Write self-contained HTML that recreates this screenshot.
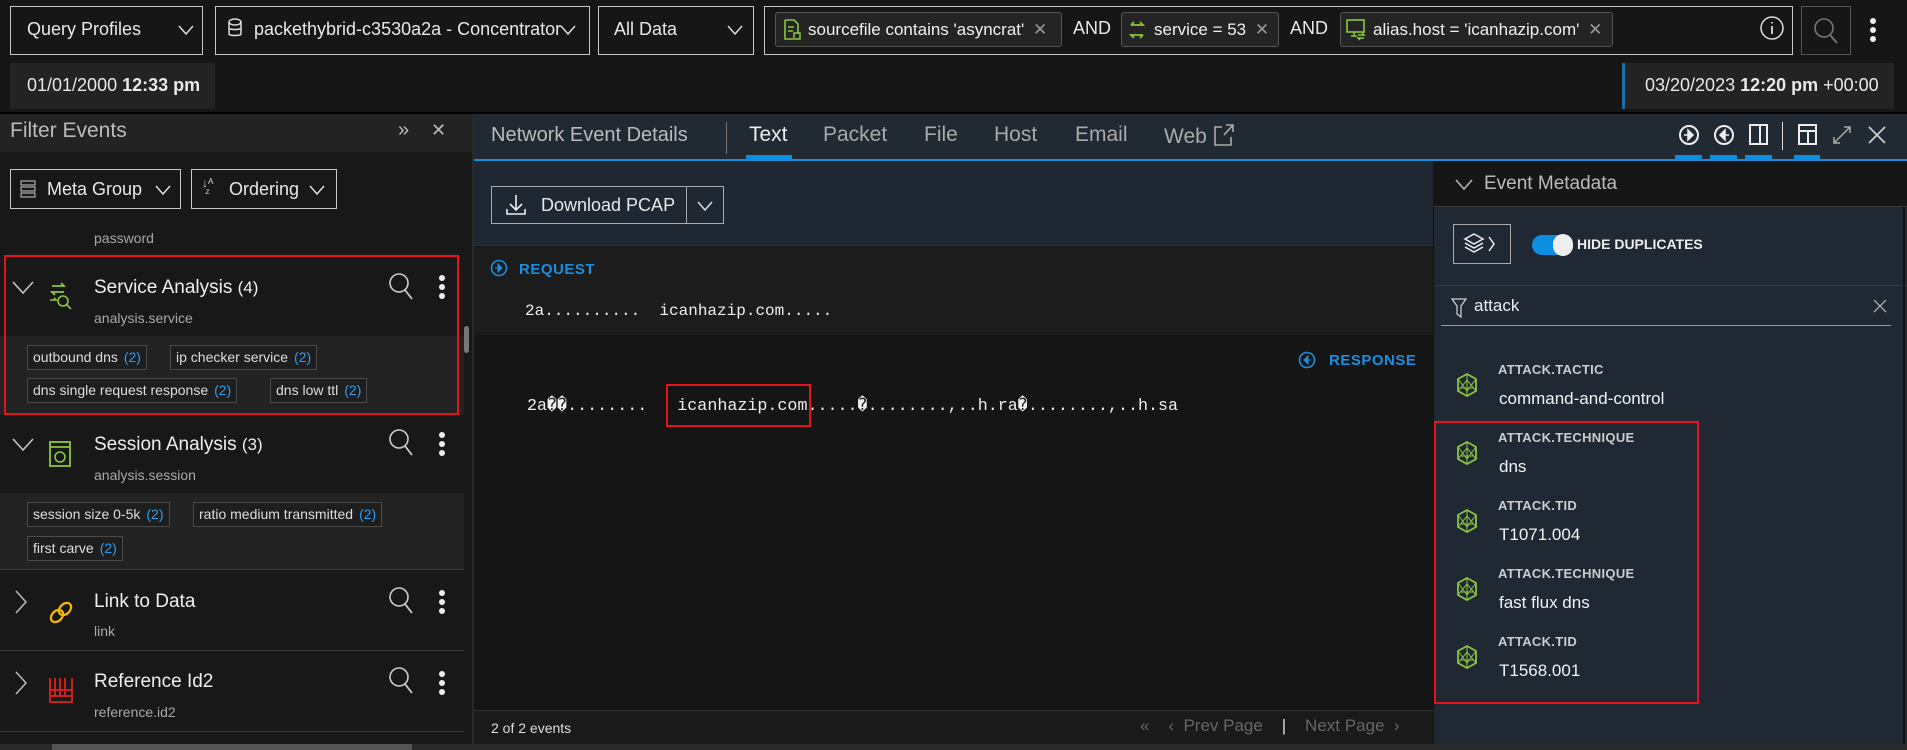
<!DOCTYPE html>
<html><head><meta charset="utf-8"><style>
*{box-sizing:border-box;margin:0;padding:0}
body{width:1907px;height:750px;background:#161616;font-family:"Liberation Sans",sans-serif;color:#e8e8e8;position:relative;overflow:hidden}
.a{position:absolute;white-space:nowrap}
.box{position:absolute;border:1px solid #c8c8c8;background:#161616}
.chip{position:absolute;border:1px solid #555;border-radius:3px;background:#242424;height:35px;top:12px;font-size:17px;line-height:33px;padding-left:32px;color:#f0f0f0}
.tag{position:absolute;border:1px solid #4a4a4a;background:#1e1e1e;height:25px;font-size:14px;line-height:23px;padding:0 5px;color:#ddd}
.tag b{font-weight:normal;color:#2a9df4;margin-left:6px}
.sub{color:#a8a8a8;font-size:14px}
.ttl{font-size:19px;color:#eee}
.lab{font-size:13px;font-weight:bold;color:#ccc;letter-spacing:.3px}
.val{font-size:17px;color:#f2f2f2}
.mono{font-family:"Liberation Mono",monospace;font-size:16px;color:#eee}
</style></head><body>
<!-- top bar -->
<div class="box" style="left:10px;top:6px;width:193px;height:49px"></div>
<div class="a" style="left:27px;top:19px;font-size:18px">Query Profiles</div>
<svg class="a" style="left:178px;top:24px" width="16" height="12"><path d="M1 2 L8 10 L15 2" stroke="#ddd" fill="none" stroke-width="1.5"/></svg>
<div class="box" style="left:215px;top:6px;width:375px;height:49px"></div>
<svg class="a" style="left:228px;top:18px" width="14" height="20"><ellipse cx="7" cy="4" rx="6" ry="3" stroke="#ddd" fill="none" stroke-width="1.5"/><path d="M1 4v12c0 2 12 2 12 0V4M1 10c0 2 12 2 12 0" stroke="#ddd" fill="none" stroke-width="1.5"/></svg>
<div class="a" style="left:254px;top:19px;font-size:18px">packethybrid-c3530a2a - Concentrator</div>
<svg class="a" style="left:560px;top:24px" width="16" height="12"><path d="M1 2 L8 10 L15 2" stroke="#ddd" fill="none" stroke-width="1.5"/></svg>
<div class="box" style="left:598px;top:6px;width:156px;height:49px"></div>
<div class="a" style="left:614px;top:19px;font-size:18px">All Data</div>
<svg class="a" style="left:727px;top:24px" width="16" height="12"><path d="M1 2 L8 10 L15 2" stroke="#ddd" fill="none" stroke-width="1.5"/></svg>
<div class="box" style="left:764px;top:6px;width:1029px;height:49px"></div>
<div class="chip" style="left:775px;width:287px">sourcefile contains 'asyncrat' <span style="color:#999;margin-left:4px">✕</span></div>
<svg class="a" style="left:783px;top:19px" width="18" height="22"><path d="M2 1h9l4 4v10M2 1v19h8" stroke="#8cc63f" fill="none" stroke-width="1.6"/><path d="M5 8h6M5 12h5" stroke="#8cc63f" stroke-width="1.5"/><rect x="11" y="14" width="6" height="6" stroke="#8cc63f" fill="none" stroke-width="1.5"/></svg>
<div class="a" style="left:1073px;top:18px;font-size:18px">AND</div>
<div class="chip" style="left:1121px;width:158px">service = 53 <span style="color:#999;margin-left:4px">✕</span></div>
<svg class="a" style="left:1128px;top:18px" width="18" height="24"><path d="M3 7h12l-3-3M15 17H3l3 3M3 7l3-3M15 17l-3 3" stroke="#8cc63f" fill="none" stroke-width="1.8"/></svg>
<div class="a" style="left:1290px;top:18px;font-size:18px">AND</div>
<div class="chip" style="left:1340px;width:273px">alias.host = 'icanhazip.com' <span style="color:#999;margin-left:4px">✕</span></div>
<svg class="a" style="left:1346px;top:19px" width="20" height="22"><rect x="1" y="1" width="17" height="12" stroke="#8cc63f" fill="none" stroke-width="1.6"/><path d="M5 17h6M8 13v4M12 16h6l-2-2M18 19h-6l2 2" stroke="#8cc63f" fill="none" stroke-width="1.5"/></svg>
<svg class="a" style="left:1759px;top:15px" width="26" height="26"><circle cx="13" cy="13" r="11" stroke="#ddd" fill="none" stroke-width="1.5"/><path d="M13 11v8M13 7v1.5" stroke="#ddd" stroke-width="1.8"/></svg>
<div class="box" style="left:1801px;top:6px;width:50px;height:49px;border-color:#555"></div>
<svg class="a" style="left:1813px;top:17px" width="26" height="28"><circle cx="11" cy="11" r="9" stroke="#777" fill="none" stroke-width="1.6"/><path d="M17 18l7 8" stroke="#777" stroke-width="1.8"/></svg>
<svg class="a" style="left:1867px;top:17px" width="12" height="26"><circle cx="6" cy="4" r="3" fill="#eee"/><circle cx="6" cy="13" r="3" fill="#eee"/><circle cx="6" cy="22" r="3" fill="#eee"/></svg>
<div class="a" style="left:10px;top:63px;width:205px;height:46px;background:#232323"></div>
<div class="a" style="left:27px;top:75px;font-size:18px">01/01/2000 <b>12:33 pm</b></div>
<div class="a" style="left:1622px;top:63px;width:272px;height:46px;background:#232323;border-left:3px solid #1a6fa8"></div>
<div class="a" style="left:1645px;top:75px;font-size:18px">03/20/2023 <b>12:20 pm</b> +00:00</div>
<div class="a" style="left:0;top:112px;width:1907px;height:2px;background:#000"></div>
<!-- left panel -->
<div class="a" style="left:0;top:114px;width:474px;height:636px;background:#181818"></div>
<div class="a" style="left:0;top:114px;width:474px;height:38px;background:#232323"></div>
<div class="a" style="left:10px;top:119px;font-size:21px;color:#bbb">Filter Events</div>
<div class="a" style="left:398px;top:119px;font-size:20px;color:#bbb">»</div>
<div class="a" style="left:431px;top:120px;font-size:18px;color:#bbb">✕</div>
<div class="box" style="left:10px;top:169px;width:171px;height:40px;background:#181818"></div>
<svg class="a" style="left:20px;top:180px" width="16" height="18"><rect x="1" y="1" width="14" height="4" stroke="#ccc" fill="none"/><rect x="1" y="7" width="14" height="4" stroke="#ccc" fill="none"/><rect x="1" y="13" width="14" height="4" stroke="#ccc" fill="none"/></svg>
<div class="a" style="left:47px;top:179px;font-size:18px">Meta Group</div>
<svg class="a" style="left:155px;top:184px" width="16" height="12"><path d="M1 2 L8 10 L15 2" stroke="#ddd" fill="none" stroke-width="1.5"/></svg>
<div class="box" style="left:191px;top:169px;width:146px;height:40px;background:#181818"></div>
<div class="a" style="left:202px;top:178px;font-size:12px;color:#ccc;line-height:10px">↓ᴬ<br>&nbsp;ᶻ</div>
<div class="a" style="left:229px;top:179px;font-size:18px">Ordering</div>
<svg class="a" style="left:309px;top:184px" width="16" height="12"><path d="M1 2 L8 10 L15 2" stroke="#ddd" fill="none" stroke-width="1.5"/></svg>
<div class="a sub" style="left:94px;top:230px">password</div>
<!-- service analysis -->
<svg class="a" style="left:12px;top:281px" width="22" height="14"><path d="M1 1 L11 12 L21 1" stroke="#ccc" fill="none" stroke-width="1.5"/></svg>
<svg class="a" style="left:48px;top:280px" width="26" height="30"><path d="M4 6h12l-3-3M16 12H4l3 3" stroke="#8cc63f" fill="none" stroke-width="1.8"/><circle cx="15" cy="21" r="5" stroke="#8cc63f" fill="none" stroke-width="1.6"/><path d="M19 25l4 4M2 20h6l-2-2" stroke="#8cc63f" fill="none" stroke-width="1.6"/></svg>
<div class="a ttl" style="left:94px;top:277px">Service Analysis <span style="font-size:17px">(4)</span></div>
<div class="a sub" style="left:94px;top:310px">analysis.service</div>
<svg class="a" style="left:388px;top:272px" width="28" height="30"><circle cx="11" cy="11" r="9" stroke="#ccc" fill="none" stroke-width="1.6"/><path d="M17 18l7 9" stroke="#ccc" stroke-width="1.8"/></svg>
<svg class="a" style="left:436px;top:274px" width="12" height="26"><circle cx="6" cy="4" r="3" fill="#eee"/><circle cx="6" cy="13" r="3" fill="#eee"/><circle cx="6" cy="22" r="3" fill="#eee"/></svg>
<div class="a" style="left:0;top:336px;width:464px;height:79px;background:#232323"></div>
<div class="tag" style="left:27px;top:345px">outbound dns<b>(2)</b></div>
<div class="tag" style="left:170px;top:345px">ip checker service<b>(2)</b></div>
<div class="tag" style="left:27px;top:378px">dns single request response<b>(2)</b></div>
<div class="tag" style="left:270px;top:378px">dns low ttl<b>(2)</b></div>
<div class="a" style="left:4px;top:255px;width:455px;height:160px;border:2px solid #e4141f"></div>
<div class="a" style="left:464px;top:326px;width:5px;height:27px;background:#777;border-radius:3px"></div>
<!-- session -->
<svg class="a" style="left:12px;top:438px" width="22" height="14"><path d="M1 1 L11 12 L21 1" stroke="#ccc" fill="none" stroke-width="1.5"/></svg>
<svg class="a" style="left:48px;top:440px" width="26" height="32"><rect x="2" y="2" width="20" height="24" stroke="#8cc63f" fill="none" stroke-width="1.8"/><path d="M2 7h20" stroke="#8cc63f" stroke-width="1.8"/><circle cx="12" cy="17" r="5" stroke="#8cc63f" fill="none" stroke-width="1.6"/></svg>
<div class="a ttl" style="left:94px;top:434px">Session Analysis <span style="font-size:17px">(3)</span></div>
<div class="a sub" style="left:94px;top:467px">analysis.session</div>
<svg class="a" style="left:388px;top:428px" width="28" height="30"><circle cx="11" cy="11" r="9" stroke="#ccc" fill="none" stroke-width="1.6"/><path d="M17 18l7 9" stroke="#ccc" stroke-width="1.8"/></svg>
<svg class="a" style="left:436px;top:431px" width="12" height="26"><circle cx="6" cy="4" r="3" fill="#eee"/><circle cx="6" cy="13" r="3" fill="#eee"/><circle cx="6" cy="22" r="3" fill="#eee"/></svg>
<div class="a" style="left:0;top:493px;width:464px;height:77px;background:#232323;border-bottom:1px solid #3a3a3a"></div>
<div class="tag" style="left:27px;top:502px">session size 0-5k<b>(2)</b></div>
<div class="tag" style="left:193px;top:502px">ratio medium transmitted<b>(2)</b></div>
<div class="tag" style="left:27px;top:536px">first carve<b>(2)</b></div>
<!-- link -->
<svg class="a" style="left:14px;top:590px" width="14" height="24"><path d="M2 1 L12 12 L2 23" stroke="#bbb" fill="none" stroke-width="1.5"/></svg>
<svg class="a" style="left:48px;top:600px" width="26" height="26"><ellipse cx="9" cy="16" rx="5" ry="7" transform="rotate(45 9 16)" stroke="#f5b800" fill="none" stroke-width="2.2"/><ellipse cx="17" cy="9" rx="5" ry="7" transform="rotate(45 17 9)" stroke="#f5b800" fill="none" stroke-width="2.2"/></svg>
<div class="a ttl" style="left:94px;top:591px">Link to Data</div>
<div class="a sub" style="left:94px;top:623px">link</div>
<svg class="a" style="left:388px;top:586px" width="28" height="30"><circle cx="11" cy="11" r="9" stroke="#ccc" fill="none" stroke-width="1.6"/><path d="M17 18l7 9" stroke="#ccc" stroke-width="1.8"/></svg>
<svg class="a" style="left:436px;top:589px" width="12" height="26"><circle cx="6" cy="4" r="3" fill="#eee"/><circle cx="6" cy="13" r="3" fill="#eee"/><circle cx="6" cy="22" r="3" fill="#eee"/></svg>
<div class="a" style="left:0;top:650px;width:464px;height:1px;background:#3a3a3a"></div>
<!-- reference -->
<svg class="a" style="left:14px;top:671px" width="14" height="24"><path d="M2 1 L12 12 L2 23" stroke="#bbb" fill="none" stroke-width="1.5"/></svg>
<svg class="a" style="left:48px;top:676px" width="26" height="30"><path d="M2 2v24h22V2M7 2v18M12 2v18M17 2v18M2 14h22M2 20h22" stroke="#e0201e" fill="none" stroke-width="1.8"/></svg>
<div class="a ttl" style="left:94px;top:671px">Reference Id2</div>
<div class="a sub" style="left:94px;top:704px">reference.id2</div>
<svg class="a" style="left:388px;top:666px" width="28" height="30"><circle cx="11" cy="11" r="9" stroke="#ccc" fill="none" stroke-width="1.6"/><path d="M17 18l7 9" stroke="#ccc" stroke-width="1.8"/></svg>
<svg class="a" style="left:436px;top:670px" width="12" height="26"><circle cx="6" cy="4" r="3" fill="#eee"/><circle cx="6" cy="13" r="3" fill="#eee"/><circle cx="6" cy="22" r="3" fill="#eee"/></svg>
<div class="a" style="left:0;top:731px;width:464px;height:1px;background:#3a3a3a"></div>
<div class="a" style="left:0;top:744px;width:1907px;height:6px;background:#2a2a2a"></div>
<div class="a" style="left:52px;top:744px;width:360px;height:6px;background:#555"></div>
<div class="a" style="left:472px;top:114px;width:2px;height:636px;background:#2a2a2a"></div>
<!-- center -->
<div class="a" style="left:474px;top:114px;width:1433px;height:46px;background:#212a33"></div>
<div class="a" style="left:474px;top:159px;width:1433px;height:2px;background:#1a8fd6"></div>
<div class="a" style="left:491px;top:124px;font-size:20px;color:#bbb">Network Event Details</div>
<div class="a" style="left:726px;top:122px;width:1px;height:32px;background:#777"></div>
<div class="a" style="left:749px;top:123px;font-size:21px;color:#eee">Text</div>
<div class="a" style="left:746px;top:155px;width:46px;height:5px;background:#0b8fe0"></div>
<div class="a" style="left:823px;top:123px;font-size:21px;color:#aaa">Packet</div>
<div class="a" style="left:924px;top:123px;font-size:21px;color:#aaa">File</div>
<div class="a" style="left:994px;top:123px;font-size:21px;color:#aaa">Host</div>
<div class="a" style="left:1075px;top:123px;font-size:21px;color:#aaa">Email</div>
<div class="a" style="left:1164px;top:125px;font-size:21px;color:#aaa">Web</div>
<svg class="a" style="left:1212px;top:123px" width="22" height="24"><path d="M10 4H3v18h16v-8M12 12l9-10M14 2h7v7" stroke="#aaa" fill="none" stroke-width="1.6"/></svg>
<svg class="a" style="left:1678px;top:124px" width="22" height="22"><circle cx="11" cy="11" r="9" stroke="#eee" fill="none" stroke-width="2"/><path d="M6 11h5M10 6l5 5-5 5z" stroke="#eee" fill="#eee" stroke-width="1.5"/></svg>
<svg class="a" style="left:1713px;top:124px" width="22" height="22"><circle cx="11" cy="11" r="9" stroke="#eee" fill="none" stroke-width="2"/><path d="M16 11h-5M12 6l-5 5 5 5z" stroke="#eee" fill="#eee" stroke-width="1.5"/></svg>
<svg class="a" style="left:1749px;top:124px" width="20" height="22"><rect x="1" y="1" width="17" height="19" stroke="#eee" fill="none" stroke-width="2"/><path d="M11 1v19" stroke="#eee" stroke-width="2"/></svg>
<div class="a" style="left:1782px;top:122px;width:1px;height:28px;background:#ddd"></div>
<svg class="a" style="left:1798px;top:124px" width="20" height="22"><rect x="1" y="1" width="17" height="19" stroke="#eee" fill="none" stroke-width="2"/><path d="M1 7h17M10 7v13" stroke="#eee" stroke-width="2"/></svg>
<svg class="a" style="left:1832px;top:125px" width="20" height="20"><path d="M2 18L18 2M12 2h6v6M2 12v6h6" stroke="#aaa" fill="none" stroke-width="1.5"/></svg>
<svg class="a" style="left:1867px;top:125px" width="20" height="20"><path d="M2 2L18 18M18 2L2 18" stroke="#ccc" stroke-width="1.8"/></svg>
<div class="a" style="left:1675px;top:155px;width:27px;height:5px;background:#0b8fe0"></div>
<div class="a" style="left:1710px;top:155px;width:27px;height:5px;background:#0b8fe0"></div>
<div class="a" style="left:1745px;top:155px;width:27px;height:5px;background:#0b8fe0"></div>
<div class="a" style="left:1794px;top:155px;width:26px;height:5px;background:#0b8fe0"></div>
<div class="a" style="left:474px;top:161px;width:960px;height:85px;background:#1f2832;border-bottom:1px solid #333"></div>
<div class="box" style="left:491px;top:186px;width:233px;height:38px;background:#1f2832;border-color:#aaa"></div>
<div class="a" style="left:686px;top:187px;width:1px;height:36px;background:#aaa"></div>
<svg class="a" style="left:505px;top:193px" width="22" height="24"><path d="M11 2v15M5 11l6 6 6-6M2 16v5h18v-5" stroke="#eee" fill="none" stroke-width="1.6"/></svg>
<div class="a" style="left:541px;top:195px;font-size:18px">Download PCAP</div>
<svg class="a" style="left:697px;top:200px" width="16" height="12"><path d="M1 2 L8 10 L15 2" stroke="#ddd" fill="none" stroke-width="1.5"/></svg>
<div class="a" style="left:474px;top:247px;width:960px;height:88px;background:#1c1c1c"></div>
<div class="a" style="left:474px;top:335px;width:960px;height:375px;background:#151515"></div>
<svg class="a" style="left:490px;top:259px" width="18" height="18"><circle cx="9" cy="9" r="7.5" stroke="#1a8fe0" fill="none" stroke-width="1.6"/><path d="M5 9h4M8 5l4 4-4 4z" stroke="#1a8fe0" fill="#1a8fe0"/></svg>
<div class="a" style="left:519px;top:261px;font-size:15px;font-weight:bold;color:#1a8fe0;letter-spacing:.5px">REQUEST</div>
<div class="a mono" style="left:525px;top:302px">2a..........&nbsp;&nbsp;icanhazip.com.....</div>
<svg class="a" style="left:1298px;top:351px" width="18" height="18"><circle cx="9" cy="9" r="7.5" stroke="#1a8fe0" fill="none" stroke-width="1.6"/><path d="M13 9H9M10 5L6 9l4 4z" stroke="#1a8fe0" fill="#1a8fe0"/></svg>
<div class="a" style="left:1329px;top:352px;font-size:15px;font-weight:bold;color:#1a8fe0;letter-spacing:.5px">RESPONSE</div>
<div class="a mono" style="left:527px;top:394px;font-size:16.7px">2a��........&nbsp;&nbsp;&nbsp;icanhazip.com.....�........,..h.ra�........,..h.sa</div>
<div class="a" style="left:666px;top:384px;width:145px;height:43px;border:2px solid #e4141f"></div>
<div class="a" style="left:474px;top:710px;width:960px;height:34px;background:#1a1a1a;border-top:1px solid #333"></div>
<div class="a" style="left:491px;top:720px;font-size:14px;color:#ddd">2 of 2 events</div>
<div class="a" style="left:1140px;top:716px;font-size:17px;color:#666">«&nbsp;&nbsp;&nbsp;&nbsp;‹&nbsp;&nbsp;Prev Page&nbsp;&nbsp;&nbsp;&nbsp;<span style="color:#ddd">|</span>&nbsp;&nbsp;&nbsp;&nbsp;Next Page&nbsp;&nbsp;›</div>
<!-- right panel -->
<div class="a" style="left:1433px;top:161px;width:474px;height:583px;background:#1f2833;border-left:1px solid #111"></div>
<div class="a" style="left:1433px;top:161px;width:474px;height:46px;background:#161616;border-bottom:1px solid #3a3a3a"></div>
<svg class="a" style="left:1455px;top:179px" width="18" height="12"><path d="M1 1 L9 10 L17 1" stroke="#bbb" fill="none" stroke-width="1.5"/></svg>
<div class="a" style="left:1484px;top:173px;font-size:19px;color:#bbb">Event Metadata</div>
<div class="box" style="left:1453px;top:224px;width:58px;height:40px;background:#1f2833;border-color:#aaa"></div>
<svg class="a" style="left:1463px;top:232px" width="40" height="24"><path d="M11 2l9 5-9 5-9-5zM2 11l9 5 9-5M2 15l9 5 9-5" stroke="#eee" fill="none" stroke-width="1.5"/><path d="M26 5l5 7-5 7" stroke="#eee" fill="none" stroke-width="1.5"/></svg>
<div class="a" style="left:1532px;top:235px;width:40px;height:20px;border-radius:10px;background:#0b8fe0"></div>
<div class="a" style="left:1553px;top:234px;width:20px;height:22px;border-radius:11px;background:#eee"></div>
<div class="a" style="left:1577px;top:236px;font-size:14px;font-weight:bold;color:#eee">HIDE DUPLICATES</div>
<div class="a" style="left:1434px;top:285px;width:473px;height:1px;background:#3a3a3a"></div>
<svg class="a" style="left:1451px;top:298px" width="16" height="20"><path d="M1 1h14l-5 7v11l-4-3V8z" stroke="#ccc" fill="none" stroke-width="1.3"/></svg>
<div class="a" style="left:1474px;top:296px;font-size:17px;color:#eee">attack</div>
<svg class="a" style="left:1873px;top:299px" width="14" height="14"><path d="M1 1l12 12M13 1L1 13" stroke="#aaa" stroke-width="1.3"/></svg>
<div class="a" style="left:1441px;top:325px;width:450px;height:1px;background:#999"></div>
<svg width="0" height="0" style="position:absolute"><defs><g id="ic"><path d="M11 1l9 5v12l-9 5-9-5V6z" stroke="#8cc63f" fill="none" stroke-width="1.8"/><path d="M2 6l9 12 9-12M11 1v22M5 15h12M2 18l9-11 9 11" stroke="#8cc63f" fill="none" stroke-width="1"/></g></defs></svg>
<svg class="a" style="left:1456px;top:373px" width="22" height="24"><use href="#ic"/></svg>
<svg class="a" style="left:1456px;top:441px" width="22" height="24"><use href="#ic"/></svg>
<svg class="a" style="left:1456px;top:509px" width="22" height="24"><use href="#ic"/></svg>
<svg class="a" style="left:1456px;top:577px" width="22" height="24"><use href="#ic"/></svg>
<svg class="a" style="left:1456px;top:645px" width="22" height="24"><use href="#ic"/></svg>
<div class="a lab" style="left:1498px;top:362px">ATTACK.TACTIC</div>
<div class="a val" style="left:1499px;top:389px">command-and-control</div>
<div class="a lab" style="left:1498px;top:430px">ATTACK.TECHNIQUE</div>
<div class="a val" style="left:1499px;top:457px">dns</div>
<div class="a lab" style="left:1498px;top:498px">ATTACK.TID</div>
<div class="a val" style="left:1499px;top:525px">T1071.004</div>
<div class="a lab" style="left:1498px;top:566px">ATTACK.TECHNIQUE</div>
<div class="a val" style="left:1499px;top:593px">fast flux dns</div>
<div class="a lab" style="left:1498px;top:634px">ATTACK.TID</div>
<div class="a val" style="left:1499px;top:661px">T1568.001</div>
<div class="a" style="left:1434px;top:421px;width:265px;height:283px;border:2px solid #e4141f"></div>
<div class="a" style="left:1903px;top:207px;width:2px;height:537px;background:#111"></div>
</body></html>
